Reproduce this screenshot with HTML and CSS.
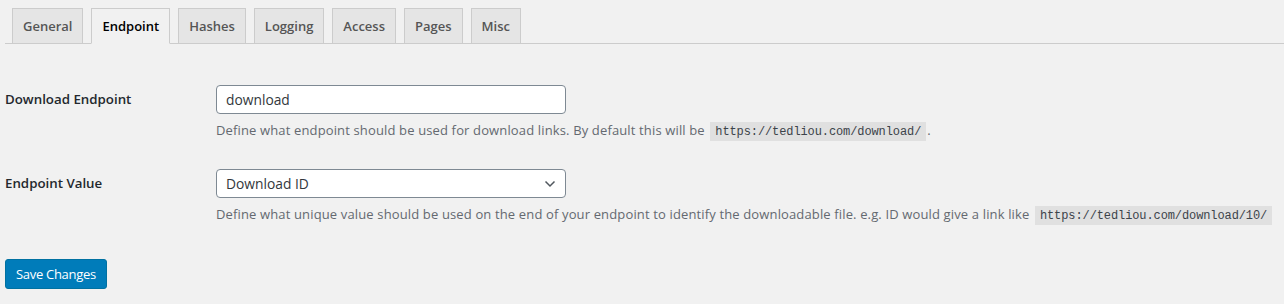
FILE: index.html
```html
<!DOCTYPE html>
<html>
<head>
<meta charset="utf-8">
<link rel="stylesheet" href="styles.css">
</head>
<body>
<div class="wrap">
  <nav class="tabs">
    <a class="tab">General</a>
    <a class="tab active">Endpoint</a>
    <a class="tab">Hashes</a>
    <a class="tab">Logging</a>
    <a class="tab">Access</a>
    <a class="tab">Pages</a>
    <a class="tab">Misc</a>
  </nav>
  <div class="form">
    <div class="row row-first">
      <div class="label">Download Endpoint</div>
      <div class="field">
        <div class="input">download</div>
        <p class="desc">Define what endpoint should be used for download links. By default this will be <code>https://tedliou.com/download/</code>.</p>
      </div>
    </div>
    <div class="row">
      <div class="label">Endpoint Value</div>
      <div class="field">
        <div class="input select">Download ID
          <svg class="chev" width="12" height="8" viewBox="0 0 12 8"><path d="M1.5 1.5 L6 6 L10.5 1.5" fill="none" stroke="#50575e" stroke-width="1.5"/></svg>
        </div>
        <p class="desc">Define what unique value should be used on the end of your endpoint to identify the downloadable file. e.g. ID would give a link like <code>https://tedliou.com/download/10/</code></p>
      </div>
    </div>
  </div>
  <div class="submit"><span class="btn">Save Changes</span></div>
</div>
</body>
</html>
```
FILE: styles.css
```css
html, body {
  margin: 0;
  padding: 0;
  background: #f1f1f1;
}
body {
  font-family: "Open Sans", "Noto Sans", sans-serif;
  color: #23282d;
  font-size: 13px;
}
.wrap {
  padding-left: 5px;
}
.tabs {
  display: flex;
  padding-top: 8px;
  border-bottom: 1px solid #cccccc;
}
.tab {
  margin-left: 8px;
  padding: 5px 10px;
  border: 1px solid #cccccc;
  border-bottom: none;
  background: #e5e5e5;
  color: #555555;
  font-size: 13px;
  font-weight: 600;
  line-height: 24px;
}
.tab:first-child {
  margin-left: 7px;
}
.tab.active {
  background: #f1f1f1;
  color: #000;
  border-bottom: 1px solid #f1f1f1;
  margin-bottom: -1px;
}
.form {
  padding-top: 41px;
}
.row {
  display: grid;
  grid-template-columns: 211px 1fr;
  margin-bottom: 27px;
}
.label {
  font-size: 13.3px;
  font-weight: 600;
  color: #23282d;
  line-height: 28px;
}
.input {
  box-sizing: border-box;
  width: 350px;
  height: 29px;
  border: 1px solid #7e8993;
  border-radius: 4px;
  background: #fff;
  padding: 0 9px;
  font-size: 13.8px;
  line-height: 27px;
  color: #32373c;
  position: relative;
}
.chev {
  position: absolute;
  right: 9px;
  top: 10px;
}
.desc {
  margin: 6px 0 0;
  color: #646970;
  font-size: 13px;
  letter-spacing: 0.14px;
  line-height: 20px;
}
code {
  font-family: "Liberation Mono", monospace;
  font-size: 12px;
  letter-spacing: -0.1px;
  background: rgba(0,0,0,0.07);
  padding: 3px 5px 2px;
  margin: 0 1px 0 2px;
  color: #3c434a;
}
.submit {
  padding-top: 6px;
}
.btn {
  display: inline-block;
  background: #007cba;
  color: #fff;
  font-size: 13px;
  letter-spacing: -0.3px;
  line-height: 28px;
  padding: 0 10px;
  border-radius: 3px;
  border: 1px solid #0071a1;
  box-sizing: border-box;
}
```
